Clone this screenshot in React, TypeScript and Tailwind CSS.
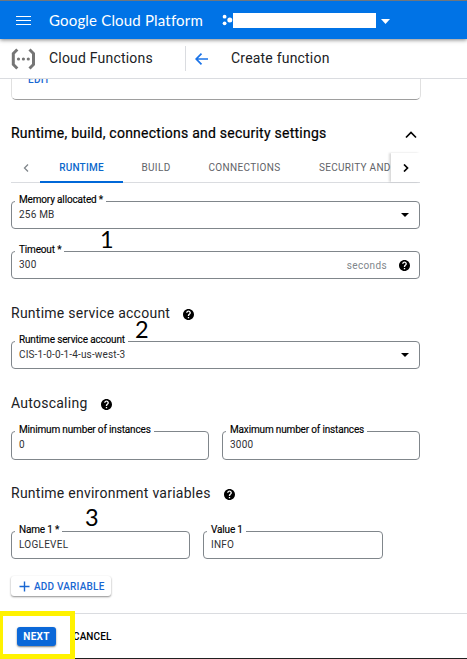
import React from "react";

const roboto = "font-['Roboto','Liberation_Sans',sans-serif]";

function Help({ className = "" }: { className?: string }) {
  return (
    <svg viewBox="2 2 20 20" className={"shrink-0 fill-black " + className}>
      <path d="M12 2C6.480 2 2 6.480 2 12s4.480 10 10 10 10-4.480 10-10S17.520 2 12 2zm1.200 17h-2.400v-2.400h2.400V19zm2.300-8.100-.9.9c-.8.8-1.400 1.400-1.400 3h-2.400v-.5c0-1.100.5-2.200 1.300-3l1.200-1.200c.4-.4.6-.8.6-1.300 0-1.100-.8-1.900-1.900-1.900s-1.900.8-1.900 1.900H7.700C7.700 6.400 9.600 4.500 12 4.500s4.300 1.900 4.300 4.300c0 .8-.3 1.600-.8 2.100z" />
    </svg>
  );
}

function Caret() {
  return (
    <svg viewBox="0 0 8 4" className="h-1 w-2 shrink-0 fill-black">
      <path d="M0 0h8L4 4z" />
    </svg>
  );
}

type FieldProps = {
  label: string;
  value: string;
  valueClass?: string;
  className?: string;
  children?: React.ReactNode;
};

function Field({ label, value, valueClass = "", className = "", children }: FieldProps) {
  return (
    <div className={"relative flex items-center rounded-[4px] border border-[#80868b] pl-[7px] " + className}>
      <span className="absolute -top-[8px] left-[3px] h-3 bg-white pr-[3px] pl-1 text-[10px] leading-3 tracking-[-0.16px] whitespace-nowrap text-black [-webkit-text-stroke:0.15px_black]">
        {label}
      </span>
      <span className={"text-[10px] leading-3 whitespace-nowrap text-[#303134] " + valueClass}>{value}</span>
      {children}
    </div>
  );
}

export default function App() {
  return (
    <div className={"relative flex h-[659px] w-[467px] flex-col overflow-hidden border-t border-[#70767c] bg-white text-black " + roboto}>
      <header className="relative z-10 flex h-[38px] shrink-0 items-center bg-[#0073e6] pl-4 shadow-[0_1px_4px_rgba(0,0,0,0.5)]">
        <svg viewBox="0 0 15 11" className="h-[11px] w-[15px] fill-white">
          <path d="M0 1h15v1H0zM0 5h15v1H0zM0 9h15v1H0z" />
        </svg>
        <span className="ml-[18px] w-[156px] font-['Lato','Open_Sans',sans-serif] text-[15px] leading-5 tracking-[0.18px] whitespace-nowrap text-white">
          Google Cloud Platform
        </span>
        <svg viewBox="0 0 12 12" className="ml-[17px] h-3 w-3 fill-white">
          <circle cx="2.600" cy="2.700" r="1.900" />
          <circle cx="2.600" cy="9.300" r="1.900" />
          <circle cx="7.800" cy="6" r="2.500" />
        </svg>
        <div className="-ml-px h-[15px] w-[143px] bg-white" />
        <svg viewBox="0 0 9 5" className="mt-[3px] ml-[5px] h-[5px] w-[9px] fill-white">
          <path d="M0 0h9L4.500 5z" />
        </svg>
      </header>

      <div className="flex h-10 shrink-0 items-center border-b border-[#dadce0] pl-[11px]">
        <svg viewBox="0 0 26 22" className="h-[22px] w-[26px] fill-none stroke-[#757575] stroke-[3]">
          <path d="M6.300 1.500 2.300 5.500v11l4 4M18.500 1.500l4 4v11l-4 4" />
          <g className="fill-[#757575] stroke-none">
            <circle cx="7.500" cy="11" r="1.600" />
            <circle cx="12.400" cy="11" r="1.600" />
            <circle cx="17.300" cy="11" r="1.600" />
          </g>
        </svg>
        <span className="ml-3 w-[136px] text-[14px] tracking-[0.2px] whitespace-nowrap text-[#202124]">Cloud Functions</span>
        <div className="h-[25px] w-px bg-[#dadce0]" />
        <svg viewBox="0 0 13 12" className="ml-[9px] h-3 w-[13px] fill-none stroke-[#1a73e8] stroke-[1.700]">
          <path d="M13 6H1.500M6.500.7 1.200 6l5.300 5.300" />
        </svg>
        <span className="ml-[23px] text-[14px] tracking-[0.2px] whitespace-nowrap text-[#202124]">Create function</span>
      </div>

      <main className="flex flex-col pr-[47px] pl-[11px]">
        <div className="-mr-px flex h-[21px] items-start overflow-hidden rounded-b-[5px] border-x border-b border-x-[#e0e0e0] border-b-[#9e9e9e] pl-4">
          <span className="-mt-[5px] text-[10px] leading-3 font-medium tracking-[0.3px] text-[#1967d2]">EDIT</span>
        </div>

        <div className="mt-[23px] flex h-5 items-center justify-between">
          <h2 className="text-[14px] tracking-[0.24px] whitespace-nowrap [-webkit-text-stroke:0.2px_black]">Runtime, build, connections and security settings</h2>
          <svg viewBox="0 0 12 8" className="mt-1 mr-[3px] h-2 w-3 fill-none stroke-black stroke-[1.700]">
            <path d="m1 6.500 5-5 5 5" />
          </svg>
        </div>

        <div className="mt-[10px] flex h-[30px] items-stretch border-b border-[#dadce0] text-[10px] text-[#5f6368]">
          <div className="flex w-[29px] items-center justify-center">
            <svg viewBox="0 0 6 8" className="h-2 w-[6px] fill-none stroke-[#80868b] stroke-[1.300]">
              <path d="M5 .5 1.500 4 5 7.500" />
            </svg>
          </div>
          <div className="-mb-px flex w-[83px] items-center justify-center border-b-2 border-[#0068d8] pt-px font-medium tracking-[0.2px] text-[#0b68cc]">RUNTIME</div>
          <div className="flex w-[66px] items-center justify-center tracking-[0.35px]">BUILD</div>
          <div className="flex w-[111px] items-center justify-center tracking-[0.35px]">CONNECTIONS</div>
          <div className="flex w-[91px] items-center pl-[19px] tracking-[0.3px] whitespace-nowrap">SECURITY AND</div>
          <div className="flex flex-1 items-center justify-center bg-white shadow-[-2px_0_2px_rgba(0,0,0,0.15)]">
            <svg viewBox="0 0 6 8" className="h-2 w-[6px] fill-none stroke-black stroke-[1.700]">
              <path d="M1 .5 4.500 4 1 7.500" />
            </svg>
          </div>
        </div>

        <Field label="Memory allocated *" value="256 MB" className="mt-[18px] h-7" valueClass="tracking-[0.2px]">
          <div className="mr-[10px] ml-auto"><Caret /></div>
        </Field>

        <Field label="Timeout *" value="300" className="mt-[22px] h-7" valueClass="tracking-[0.2px]">
          <span className="ml-auto text-[10px] tracking-[0.35px] text-[#80868b]">seconds</span>
          <Help className="mr-[9px] ml-[12px] h-[11px] w-[11px]" />
        </Field>

        <div className="mt-[24px] flex h-5 items-center">
          <h3 className="text-[14px] tracking-[0.25px] whitespace-nowrap text-[#202124]">Runtime service account</h3>
          <Help className="mt-[2px] ml-[13px] h-[11px] w-[11px]" />
        </div>

        <Field label="Runtime service account" value="CIS-1-0-0-1-4-us-west-3" className="mt-[18px] h-7" valueClass="tracking-[0.15px]">
          <div className="mr-[10px] ml-auto"><Caret /></div>
        </Field>

        <div className="mt-[24px] flex h-5 items-center">
          <h3 className="text-[14px] tracking-[0.25px] text-[#202124]">Autoscaling</h3>
          <Help className="mt-[2px] ml-[13px] h-[11px] w-[11px]" />
        </div>

        <div className="mt-[18px] flex gap-[13px]">
          <Field label="Minimum number of instances" value="0" className="h-[29px] w-[198px] pb-px" />
          <Field label="Maximum number of instances" value="3000" className="h-[29px] w-[198px] pb-px" valueClass="tracking-[0.2px]" />
        </div>

        <div className="mt-[23px] flex h-5 items-center">
          <h3 className="text-[14px] tracking-[0.25px] whitespace-nowrap text-[#202124]">Runtime environment variables</h3>
          <Help className="mt-[2px] ml-[13px] h-[11px] w-[11px]" />
        </div>

        <div className="mt-[28px] flex gap-[13px]">
          <Field label="Name 1 *" value="LOGLEVEL" className="h-7 w-[179px]" valueClass="tracking-[0.25px]" />
          <Field label="Value 1" value="INFO" className="h-7 w-[180px]" valueClass="tracking-[0.2px]" />
        </div>

        <button className="mt-[17px] flex h-5 w-[100px] items-center rounded-[3px] bg-white pl-2 text-[10px] font-medium tracking-[0.2px] whitespace-nowrap text-[#1967d2] shadow-[0_1px_2px_rgba(0,0,0,0.45)]">
          <svg viewBox="0 0 11 11" className="mr-1 h-[11px] w-[11px] fill-none stroke-[#1967d2] stroke-[1.400]">
            <path d="M5.500.5v10M.5 5.500h10" />
          </svg>
          ADD VARIABLE
        </button>
      </main>

      <footer className="mt-[17px] flex h-[46px] shrink-0 items-center border-y border-t-[#dadce0] border-b-[#202020] pl-[17px]">
        <button className="flex h-[19px] w-[39px] items-center justify-center rounded-[3px] bg-[#0b68d8] text-[10px] font-bold tracking-[0.3px] text-white shadow-[0_1px_2px_rgba(0,0,0,0.5)]">
          NEXT
        </button>
        <span className="ml-[17px] text-[10px] font-medium tracking-[0.1px]">CANCEL</span>
      </footer>

      <div className="absolute top-[610px] left-0 h-12 w-[75px] border-[5px] border-l-[3px] border-[#fff200]" />
      <span className="absolute top-[223px] left-[100px] font-['Lato','Noto_Sans',sans-serif] text-[23.500px] leading-[30px]">1</span>
      <span className="absolute top-[313px] left-[135px] font-['Lato','Noto_Sans',sans-serif] text-[23.500px] leading-[30px]">2</span>
      <span className="absolute top-[501px] left-[85px] font-['Lato','Noto_Sans',sans-serif] text-[23.500px] leading-[30px]">3</span>
    </div>
  );
}
